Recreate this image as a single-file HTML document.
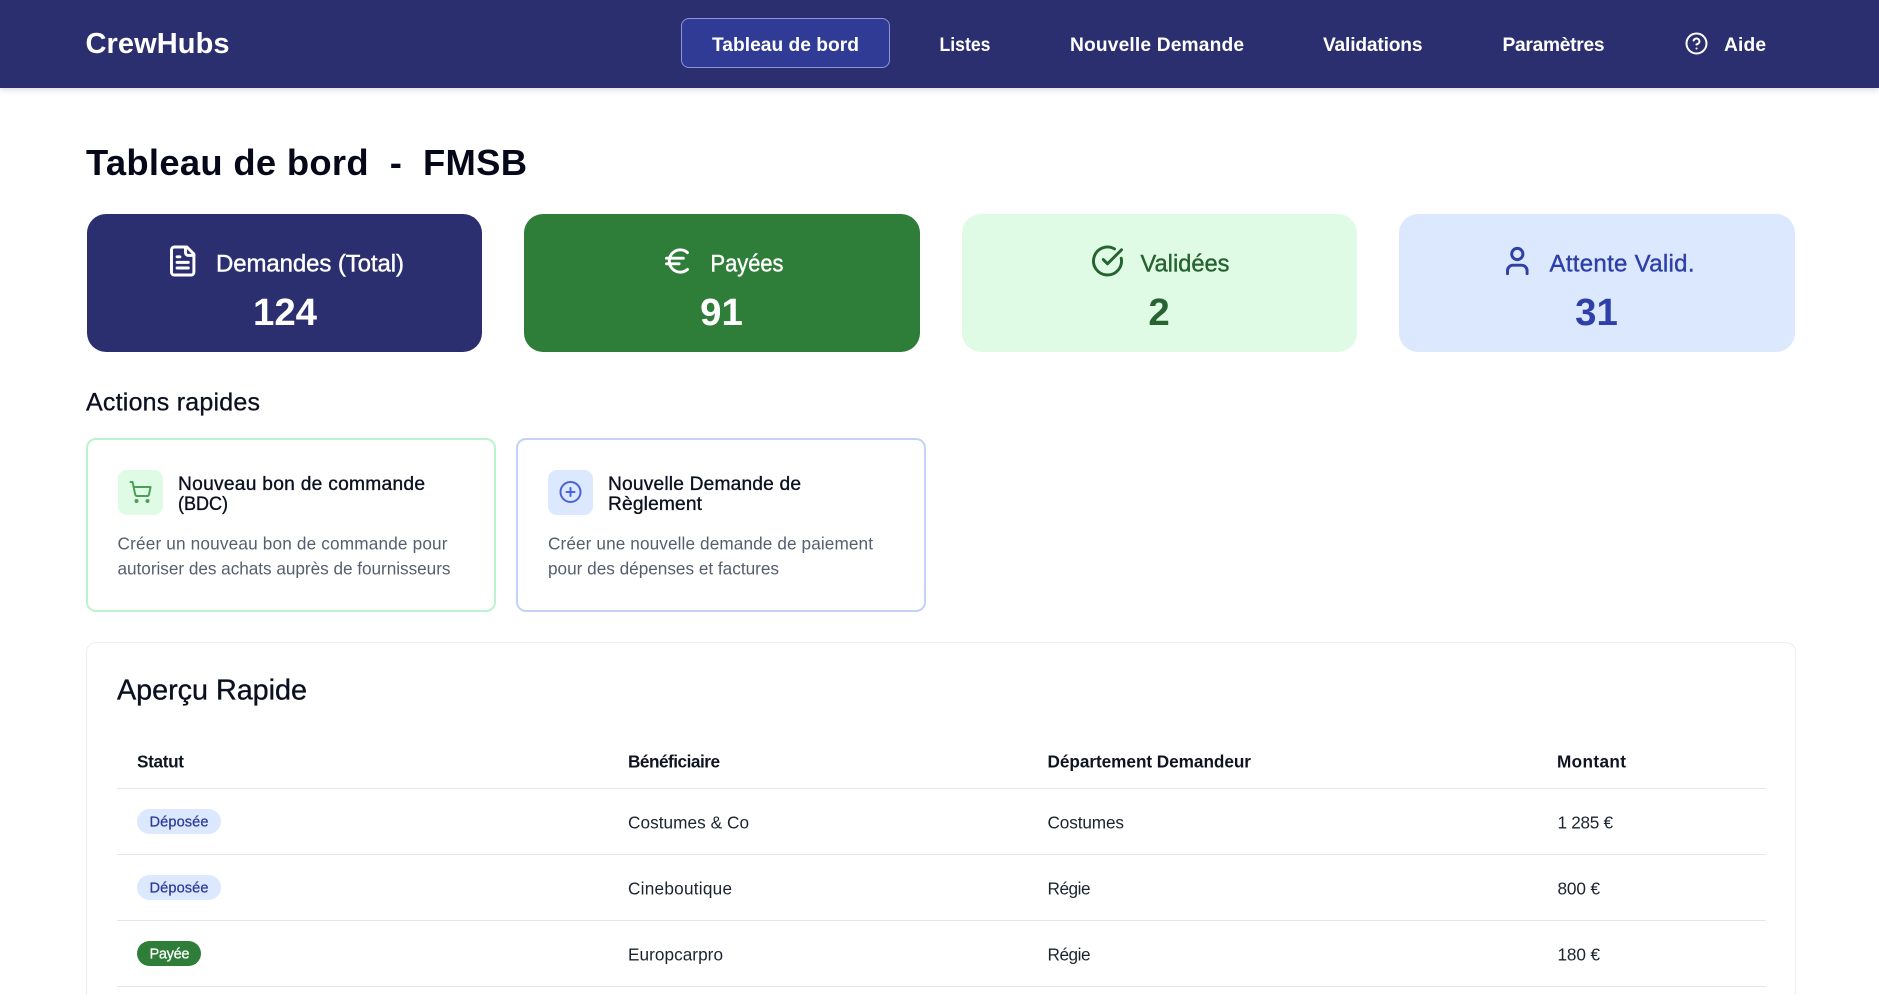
<!DOCTYPE html>
<html lang="fr">
<head>
<meta charset="utf-8">
<title>CrewHubs - Tableau de bord</title>
<style>
html,body{margin:0;padding:0;background:#fff;width:1879px;height:995px;overflow:hidden}
body{position:relative;font-family:"Liberation Sans",sans-serif}
.b{position:absolute;box-sizing:border-box}
svg.o{position:absolute;left:0;top:0;width:1879px;height:995px}
svg.o text{font-family:"Liberation Sans",sans-serif;white-space:pre}
.n{font-size:19.2px;font-weight:700;fill:#fff}
.l{font-size:24px;stroke-width:.4px}
.v{font-size:38.4px;font-weight:700;text-anchor:middle}
.t{font-size:19.2px;fill:#0b1020;stroke:#0b1020;stroke-width:.35px}
.d{font-size:17.2px;fill:#565f6e}
.h{font-size:17.2px;font-weight:700;fill:#0f1420}
.c{font-size:17.2px;fill:#1c2430}
.p{font-size:14.6px;stroke-width:.25px}
.i{fill:none;stroke-width:2;stroke-linecap:round;stroke-linejoin:round}
.s{stroke-width:2.1}
</style>
</head>
<body>
<div class="b" style="left:0;top:0;width:1879px;height:88px;background:#2b2f70;box-shadow:0 2px 6px rgba(0,0,0,.14)"></div>
<div class="b" style="left:681px;top:18px;width:209px;height:50px;background:#303b95;border:1px solid #8b95dc;border-radius:8px"></div>

<div class="b" style="left:87px;top:214px;width:395px;height:138px;background:#2b2f70;border-radius:19px"></div>
<div class="b" style="left:524px;top:214px;width:396px;height:138px;background:#2e7d38;border-radius:19px"></div>
<div class="b" style="left:962px;top:214px;width:395px;height:138px;background:#dffbe6;border-radius:19px"></div>
<div class="b" style="left:1399px;top:214px;width:396px;height:138px;background:#dbe8fe;border-radius:19px"></div>

<div class="b" style="left:86px;top:438px;width:410px;height:174px;background:#fff;border:2px solid #bcf3cf;border-radius:10px"></div>
<div class="b" style="left:516px;top:438px;width:410px;height:174px;background:#fff;border:2px solid #c4d2f8;border-radius:10px"></div>
<div class="b" style="left:118px;top:470px;width:45px;height:45px;background:#dffbe6;border-radius:9px"></div>
<div class="b" style="left:548px;top:470px;width:45px;height:45px;background:#dbe8fe;border-radius:9px"></div>

<div class="b" style="left:86px;top:642px;width:1710px;height:353px;background:#fff;border:1px solid #eceef1;border-bottom:0;border-radius:10px 10px 0 0"></div>
<div class="b" style="left:117px;top:788px;width:1649px;height:1px;background:#e5e7eb"></div>
<div class="b" style="left:117px;top:854px;width:1649px;height:1px;background:#e5e7eb"></div>
<div class="b" style="left:117px;top:920px;width:1649px;height:1px;background:#e5e7eb"></div>
<div class="b" style="left:117px;top:986px;width:1649px;height:1px;background:#e5e7eb"></div>

<div class="b" style="left:137px;top:809px;width:84px;height:25px;background:#dbe8fe;border-radius:13px"></div>
<div class="b" style="left:137px;top:875px;width:84px;height:25px;background:#dbe8fe;border-radius:13px"></div>
<div class="b" style="left:137px;top:941px;width:64px;height:25px;background:#2e7d38;border-radius:13px"></div>

<svg class="o" viewBox="0 0 1879 995" xmlns="http://www.w3.org/2000/svg">
  <!-- Header -->
  <text x="85.5" y="53" font-size="29" font-weight="700" fill="#fff" textLength="144">CrewHubs</text>
  <text class="n" x="712" y="51" textLength="147">Tableau de bord</text>
  <text class="n" x="939.5" y="51" textLength="51" lengthAdjust="spacingAndGlyphs">Listes</text>
  <text class="n" x="1070" y="51" textLength="174">Nouvelle Demande</text>
  <text class="n" x="1323" y="51" textLength="99.5">Validations</text>
  <text class="n" x="1502.5" y="51" textLength="102">Paramètres</text>
  <g class="i" stroke="#fff" transform="translate(1684.5 31.5)">
    <circle cx="12" cy="12" r="10"/><path d="M9.09 9a3 3 0 0 1 5.83 1c0 2-3 3-3 3"/><path d="M12 17h.01"/>
  </g>
  <text class="n" x="1724" y="51" textLength="42">Aide</text>

  <!-- Title -->
  <text x="86" y="175" font-size="36.4" font-weight="700" fill="#050818" textLength="441">Tableau de bord  -  FMSB</text>

  <!-- Stats -->
  <g class="i s" stroke="#fff" transform="translate(165.9 244.2) scale(1.4)">
    <path d="M15 2H6a2 2 0 0 0-2 2v16a2 2 0 0 0 2 2h12a2 2 0 0 0 2-2V7Z"/><path d="M14 2v4a2 2 0 0 0 2 2h4"/><path d="M10 9H8"/><path d="M16 13H8"/><path d="M16 17H8"/>
  </g>
  <text class="l" x="216" y="271.5" fill="#fff" stroke="#fff" textLength="188">Demandes (Total)</text>
  <text class="v" x="285" y="325" fill="#fff">124</text>

  <g class="i s" stroke="#fff" transform="translate(660.9 244.2) scale(1.4)">
    <path d="M4 10h12"/><path d="M4 14h9"/><path d="M19 6a7.7 7.7 0 0 0-5.2-2A7.9 7.9 0 0 0 6 12c0 4.4 3.5 8 7.8 8 2 0 3.8-.8 5.2-2"/>
  </g>
  <text class="l" x="710.5" y="271.5" fill="#fff" stroke="#fff" textLength="73" lengthAdjust="spacingAndGlyphs">Payées</text>
  <text class="v" x="721.5" y="325" fill="#fff">91</text>

  <g class="i s" stroke="#27632f" transform="translate(1090.7 244.2) scale(1.4)">
    <path d="M21.801 10A10 10 0 1 1 17 3.335"/><path d="m9 11 3 3L22 4"/>
  </g>
  <text class="l" x="1140.5" y="271.5" fill="#27632f" stroke="#27632f" textLength="89" lengthAdjust="spacingAndGlyphs">Validées</text>
  <text class="v" x="1159" y="325" fill="#27632f">2</text>

  <g class="i s" stroke="#2f3fa8" transform="translate(1500.5 244.2) scale(1.4)">
    <path d="M19 21v-2a4 4 0 0 0-4-4H9a4 4 0 0 0-4 4v2"/><circle cx="12" cy="7" r="4"/>
  </g>
  <text class="l" x="1549.5" y="271.5" fill="#2f3fa8" stroke="#2f3fa8" textLength="145">Attente Valid.</text>
  <text class="v" x="1596.5" y="325" fill="#2f3fa8">31</text>

  <!-- Actions -->
  <text x="86" y="410.5" font-size="25" fill="#0b1020" stroke="#0b1020" stroke-width=".3" textLength="174">Actions rapides</text>

  <g class="i" stroke="#4a9f57" transform="translate(128.5 480)">
    <circle cx="8" cy="21" r="1"/><circle cx="19" cy="21" r="1"/><path d="M2.05 2.05h2l2.66 12.42a2 2 0 0 0 2 1.58h9.78a2 2 0 0 0 1.95-1.57l1.65-7.43H5.12"/>
  </g>
  <text class="t" x="178" y="490" textLength="247">Nouveau bon de commande</text>
  <text class="t" x="178" y="510" textLength="50" lengthAdjust="spacingAndGlyphs">(BDC)</text>
  <text class="d" x="117.5" y="549.5" textLength="330">Créer un nouveau bon de commande pour</text>
  <text class="d" x="117.5" y="574.5" textLength="333">autoriser des achats auprès de fournisseurs</text>

  <g class="i" stroke="#4a63d8" transform="translate(558.5 480)">
    <circle cx="12" cy="12" r="10"/><path d="M8 12h8"/><path d="M12 8v8"/>
  </g>
  <text class="t" x="608" y="490" textLength="193">Nouvelle Demande de</text>
  <text class="t" x="608" y="510" textLength="94">Règlement</text>
  <text class="d" x="548" y="549.5" textLength="325">Créer une nouvelle demande de paiement</text>
  <text class="d" x="548" y="574.5" textLength="231">pour des dépenses et factures</text>

  <!-- Table -->
  <text x="117" y="699.5" font-size="28.8" fill="#0b1020" stroke="#0b1020" stroke-width=".35" textLength="190">Aperçu Rapide</text>
  <text class="h" x="137" y="767.5" textLength="47">Statut</text>
  <text class="h" x="628" y="767.5" textLength="92">Bénéficiaire</text>
  <text class="h" x="1047.5" y="767.5" textLength="203.5">Département Demandeur</text>
  <text class="h" x="1557" y="767.5" textLength="69">Montant</text>

  <text class="p" x="149.5" y="826.5" fill="#2f3b9a" stroke="#2f3b9a" textLength="59">Déposée</text>
  <text class="c" x="628" y="828.5" textLength="121">Costumes &amp; Co</text>
  <text class="c" x="1047.5" y="828.5" textLength="76.5">Costumes</text>
  <text class="c" x="1557.5" y="828.5" textLength="55.5">1 285 €</text>

  <text class="p" x="149.5" y="892.5" fill="#2f3b9a" stroke="#2f3b9a" textLength="59">Déposée</text>
  <text class="c" x="628" y="894.5" textLength="104">Cineboutique</text>
  <text class="c" x="1047.5" y="894.5" textLength="43">Régie</text>
  <text class="c" x="1557.5" y="894.5" textLength="42.5">800 €</text>

  <text class="p" x="149.5" y="958.5" fill="#fff" stroke="#fff" textLength="40">Payée</text>
  <text class="c" x="628" y="960.5" textLength="95">Europcarpro</text>
  <text class="c" x="1047.5" y="960.5" textLength="43">Régie</text>
  <text class="c" x="1557.5" y="960.5" textLength="42.5">180 €</text>
</svg>
</body>
</html>
